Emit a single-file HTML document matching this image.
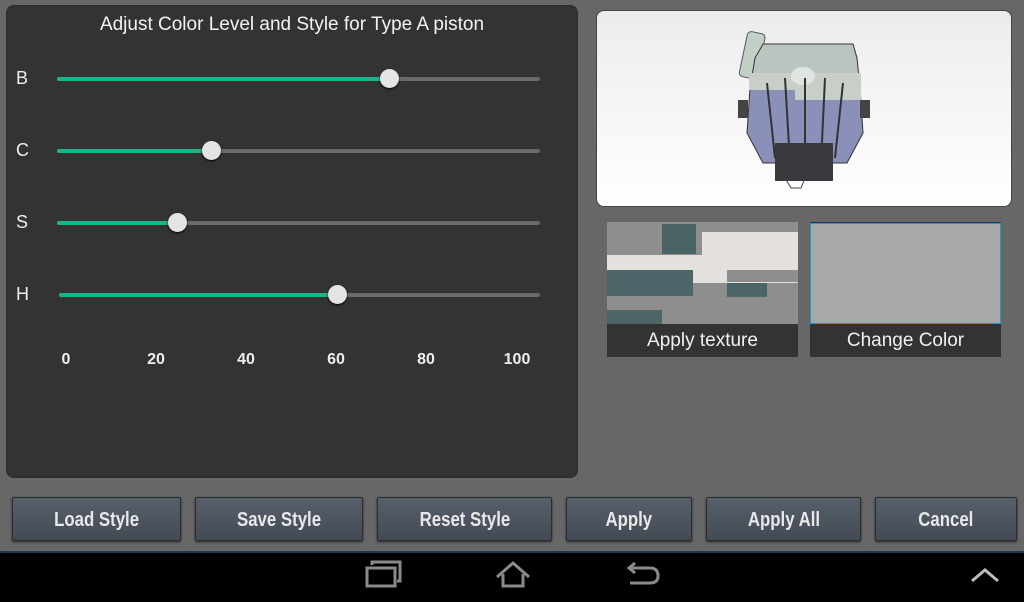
<!DOCTYPE html>
<html><head><style>
body{margin:0;width:1024px;height:600px;background:#676767;position:relative;overflow:hidden;font-family:"Liberation Sans",sans-serif}
.panel{position:absolute;left:6px;top:5px;width:570px;height:471px;background:#333;border:1px solid #2a2a2a;border-radius:8px}
.title{position:absolute;left:0;width:584px;top:14px;text-align:center;color:#f2f2f2;font-size:19px}
.lbl{position:absolute;left:16px;color:#eee;font-size:18px}
.tr{position:absolute;left:57px;width:483px;height:4px;background:#6a6a6a;border-radius:2px}
.fill{position:absolute;left:0;top:0;height:4px;background:#19b58a;border-radius:2px}
.th{position:absolute;width:19px;height:19px;border-radius:50%;background:#e4e4e4;top:-8px;margin-left:-9px;box-shadow:0 1px 2px #000}
.num{position:absolute;top:351px;color:#eee;font-size:16px;font-weight:bold;transform:translateX(-50%)}
.btn{position:absolute;top:497px;height:44px;background:linear-gradient(#57606b,#434a54);border:1px solid #2a2e33;border-radius:2px;color:#e8e8e8;font-size:20px;font-weight:bold;text-align:center;line-height:44px;box-shadow:0 1px 2px #222;box-sizing:border-box}
.btn span{display:inline-block;transform:scaleX(0.84)}
.nav{position:absolute;left:0;top:551px;width:1024px;height:49px;background:#000;border-top:2px solid #1c3a4a}
</style></head><body>
<div class="panel"></div>
<div class="title">Adjust Color Level and Style for Type A piston</div>
<div class="lbl" style="top:68px">B</div>
<div class="lbl" style="top:140px">C</div>
<div class="lbl" style="top:212px">S</div>
<div class="lbl" style="top:284px">H</div>
<div class="tr" style="top:77px"><div class="fill" style="width:332px"></div><div class="th" style="left:332px"></div></div>
<div class="tr" style="top:149px"><div class="fill" style="width:154px"></div><div class="th" style="left:154px"></div></div>
<div class="tr" style="top:221px"><div class="fill" style="width:120px"></div><div class="th" style="left:120px"></div></div>
<div class="tr" style="top:293px;left:59px;width:481px"><div class="fill" style="width:278px"></div><div class="th" style="left:278px"></div></div>
<div class="num" style="left:66px">0</div><div class="num" style="left:156px">20</div><div class="num" style="left:246px">40</div><div class="num" style="left:336px">60</div><div class="num" style="left:426px">80</div><div class="num" style="left:517px">100</div>

<div style="position:absolute;left:596px;top:10px;width:416px;height:197px;border-radius:8px;background:linear-gradient(#ececec,#fff);border:1px solid #444;box-sizing:border-box"></div>
<svg style="position:absolute;left:735px;top:28px" width="135" height="165" viewBox="0 0 135 165">
<rect x="8" y="4" width="18" height="46" rx="4" fill="#c2d0c6" stroke="#556" transform="rotate(12 16 28)"/>
<path d="M28 16 L118 16 L122 30 L125 60 L15 60 L20 30 Z" fill="#bcc4c0" stroke="#333"/>
<path d="M15 60 L125 60 L128 105 L112 135 L28 135 L12 105 Z" fill="#8b90b8" stroke="#333"/>
<path d="M14 45 L126 45 L126 72 L60 72 L60 62 L14 62 Z" fill="#c8cfc9"/>
<ellipse cx="68" cy="48" rx="12" ry="9" fill="#dfe6e2"/>
<rect x="3" y="72" width="10" height="18" fill="#444"/><rect x="125" y="72" width="10" height="18" fill="#444"/>
<path d="M32 55 L40 130 M50 50 L55 135 M70 50 L70 135 M90 50 L86 135 M108 55 L100 130" stroke="#333" stroke-width="2"/>
<rect x="40" y="115" width="58" height="38" fill="#3a3a3e"/><path d="M50 150 L56 160 L66 160 L70 150" stroke="#444" fill="none"/>
</svg>

<div style="position:absolute;left:607px;top:222px;width:191px;height:135px;background:#333;overflow:hidden">
<svg width="191" height="102" style="display:block"><rect width="191" height="102" fill="#8e8e8e"/>
<rect x="0" y="33" width="191" height="28" fill="#e4e0de"/><rect x="0" y="10" width="55" height="23" fill="#8e8e8e"/><rect x="95" y="10" width="96" height="23" fill="#e4e0de"/>
<rect x="55" y="2" width="34" height="30" fill="#4a6466"/><rect x="0" y="48" width="86" height="26" fill="#4d6568"/><rect x="120" y="48" width="71" height="12" fill="#8e8e8e"/><rect x="120" y="61" width="40" height="14" fill="#4c6668"/><rect x="0" y="88" width="55" height="14" fill="#4f6566"/>
</svg>
<div style="color:#f0f0f0;font-size:19px;text-align:center;margin-top:6px">Apply texture</div></div>
<div style="position:absolute;left:810px;top:222px;width:191px;height:135px;background:#333;overflow:hidden">
<div style="background:#a8a8a8;border:1px solid #1e9ad6;box-sizing:border-box;margin-top:1px;height:101px"></div>
<div style="color:#f0f0f0;font-size:19px;text-align:center;margin-top:6px">Change Color</div></div>

<div class="btn" style="left:12px;width:169px"><span>Load Style</span></div>
<div class="btn" style="left:195px;width:168px"><span>Save Style</span></div>
<div class="btn" style="left:377px;width:175px"><span>Reset Style</span></div>
<div class="btn" style="left:566px;width:126px"><span>Apply</span></div>
<div class="btn" style="left:706px;width:155px"><span>Apply All</span></div>
<div class="btn" style="left:875px;width:142px"><span>Cancel</span></div>

<div class="nav"></div>
<svg style="position:absolute;left:0;top:555px" width="1024" height="45" fill="none" stroke="#8a8a8a" stroke-width="3">
<rect x="367" y="13" width="28" height="18"/><path d="M372 10 V7 H400 V26 H397"/>
<path d="M497 22 L513 8 L529 22 M503 19 V31 H523 V19"/>
<path d="M630 13 H650 Q658 13 658 21 Q658 28 650 28 H630 M635 8 L629 13 L635 18"/>
<path d="M972 26 L985 15 L998 26" stroke="#bbb"/>
</svg>
</body></html>
